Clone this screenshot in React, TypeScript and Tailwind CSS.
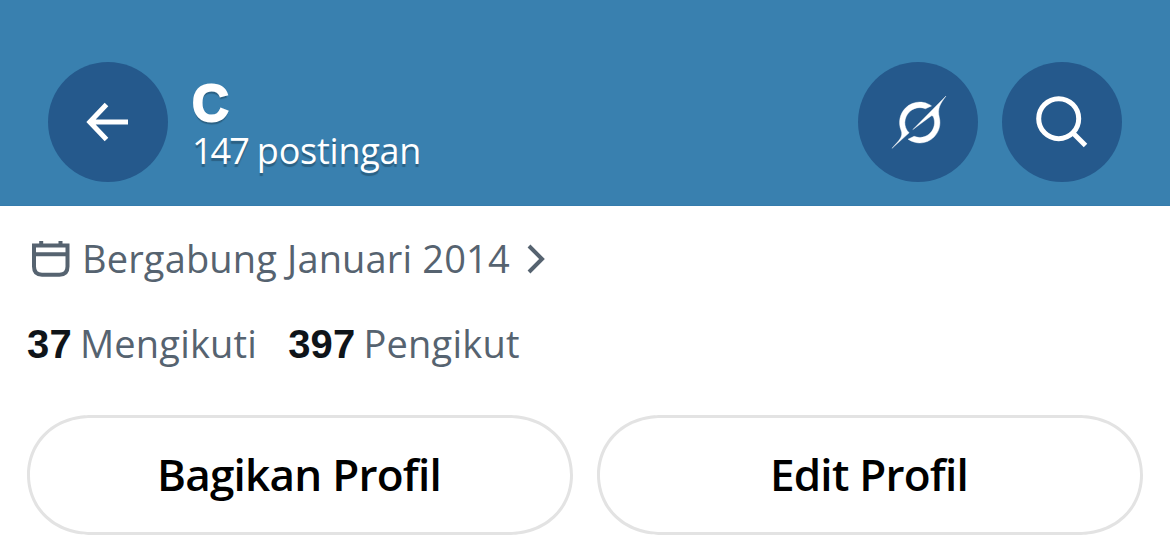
import type { ReactNode } from "react";

interface RoundButtonProps {
  label: string;
  children: ReactNode;
}

function RoundButton({ label, children }: RoundButtonProps) {
  return (
    <button
      aria-label={label}
      className="flex size-[120px] shrink-0 items-center justify-center rounded-full bg-[#25598c] text-white"
    >
      <svg width="120" height="120" viewBox="0 0 120 120" fill="none">
        {children}
      </svg>
    </button>
  );
}

interface StatProps {
  value: string;
  label: string;
}

function Stat({ value, label }: StatProps) {
  return (
    <div className="flex items-baseline gap-[8px] whitespace-nowrap">
      <span className="font-['Liberation_Sans',sans-serif] text-[40px] leading-[40px] font-bold tracking-[0.2px] text-[#0f1419]">
        {value}
      </span>
      <span className="text-[38px] leading-10 tracking-[0.2px]">{label}</span>
    </div>
  );
}

function PillButton({ children }: { children: ReactNode }) {
  return (
    <button className="h-[120px] rounded-[64px/60px] border-[3px] border-[#e3e3e3] pr-[2px] pb-[2px] whitespace-nowrap [corner-shape:superellipse(1.06)]">
      {children}
    </button>
  );
}

export default function App() {
  return (
    <div className="h-[559px] w-[1170px] overflow-hidden bg-white font-['Open_Sans',sans-serif]">
      <header className="flex h-[206px] border-b border-[#357cad] bg-[#3980af] pt-[62px] pr-12 pl-12">
        <RoundButton label="Kembali">
          <path
            d="M80 60H43M58.5 42.5L41.8 60L58.5 77.5"
            stroke="currentColor"
            strokeWidth="5"
          />
        </RoundButton>

        <div className="ml-6 flex-1 pt-[18px] whitespace-nowrap text-white [text-shadow:0_3px_1px_rgba(0,0,0,0.25)]">
          <h1 className="font-['Liberation_Sans',sans-serif] text-[51px] leading-[48px] font-bold [-webkit-text-stroke:2px_white]">
            C
          </h1>
          <p className="text-[36px] leading-[46px] tracking-[-0.25px]">
            <span className="tracking-[-2px]">147</span> postingan
          </p>
        </div>

        <div className="flex gap-6">
          <RoundButton label="Grok">
            <path
              transform="translate(34 34) scale(1.636)"
              fill="currentColor"
              stroke="currentColor"
              strokeWidth="0.25"
              d="M12.745 20.54l10.97-8.19c.539-.4 1.307-.244 1.564.38 1.349 3.288.746 7.241-1.938 9.955-2.683 2.714-6.417 3.31-9.83 1.954l-3.728 1.745c5.347 3.697 11.84 2.782 15.898-1.324 3.219-3.255 4.216-7.692 3.284-11.693l.008.009c-1.351-5.878.332-8.227 3.782-13.031L33 0l-4.54 4.59v-.014L12.743 20.544m-2.263 1.987c-3.837-3.707-3.175-9.446.1-12.755 2.42-2.449 6.388-3.448 9.852-1.979l3.72-1.737c-.67-.49-1.53-1.017-2.515-1.387-4.455-1.854-9.789-.931-13.41 2.728-3.483 3.523-4.579 8.94-2.697 13.561 1.405 3.454-.899 5.898-3.22 8.364C1.49 30.2.666 31.074 0 32l10.478-9.466"
            />
          </RoundButton>
          <RoundButton label="Cari">
            <circle cx="56.7" cy="56.7" r="20" stroke="currentColor" strokeWidth="5" />
            <path d="M71 71L83.5 83.5" stroke="currentColor" strokeWidth="5" />
          </RoundButton>
        </div>
      </header>

      <main className="px-[27px] pt-8">
        <div className="flex h-10 items-center text-[#566370]">
          <svg className="mt-[1px] ml-[5px] shrink-0" width="38" height="38" viewBox="0 0 38 38" fill="none">
            <path
              d="M2 5.5H35.5V26.5C35.5 32 32.5 34.7 27.5 34.7H10C5 34.7 2 32 2 26.5V5.5ZM2 14.2H35.5M9.2 1V6M28.5 1V6"
              stroke="currentColor"
              strokeWidth="4"
            />
          </svg>
          <span className="ml-[12px] text-[38px] leading-10 tracking-[0.15px] whitespace-nowrap">
            Bergabung Januari 2014
          </span>
          <svg className="mt-[2px] ml-[17px] shrink-0" width="20" height="32" viewBox="0 0 20 32" fill="none">
            <path d="M2 3L15 16L2 29" stroke="currentColor" strokeWidth="4" />
          </svg>
        </div>

        <div className="mt-[45px] flex h-10 gap-[31px] text-[#566370]">
          <Stat value="37" label="Mengikuti" />
          <Stat value="397" label="Pengikut" />
        </div>

        <div className="mt-[52px] grid grid-cols-2 gap-6 text-[44px] leading-[48px] font-semibold tracking-[-0.75px] text-black">
          <PillButton>Bagikan Profil</PillButton>
          <PillButton>Edit Profil</PillButton>
        </div>
      </main>
    </div>
  );
}
